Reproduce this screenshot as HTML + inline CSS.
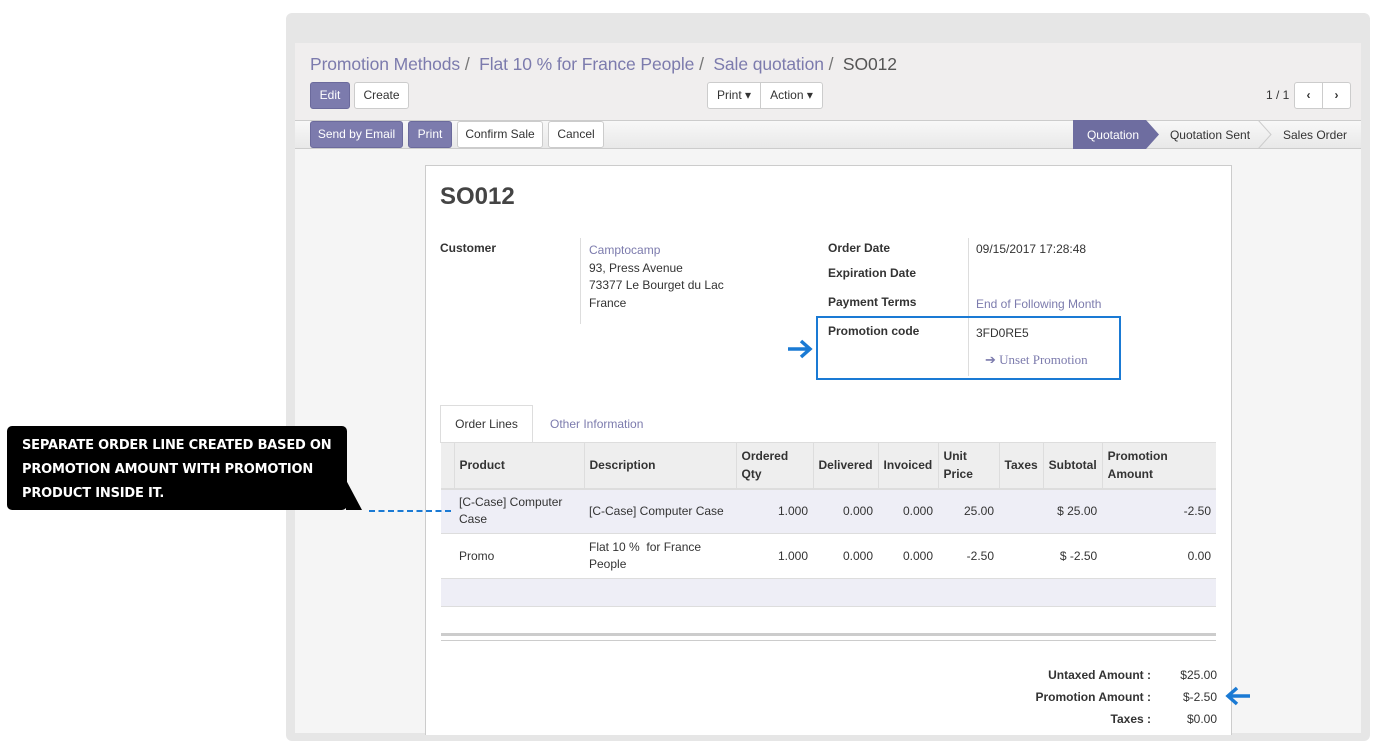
<!DOCTYPE html>
<html><head><meta charset="utf-8"><style>
*{box-sizing:border-box;margin:0;padding:0}
body{width:1384px;height:751px;background:#fff;font-family:"Liberation Sans",Arial,sans-serif;font-size:12px;color:#333;position:relative;overflow:hidden}
.a{position:absolute}
.btn{position:absolute;height:27px;border:1px solid #ccc;background:#fff;border-radius:3px;font-size:12px;line-height:25px;text-align:center;color:#333}
.bp{background:#7c7bad;border-color:#6b6a9c;color:#fff}
.lbl{font-weight:bold;color:#333;font-size:12px}
.lnk{color:#7c7bad}
table{border-collapse:collapse}
th{font-weight:bold;text-align:left;font-size:12px;line-height:18px;padding:0 5px;border-left:1px solid #ddd}
td{font-size:12px;line-height:17px;padding:0 5px}
</style></head><body>
<div class="a" style="left:286px;top:13px;width:1084px;height:728px;background:#e6e6e6;border-radius:6px"></div>
<div class="a" style="left:295px;top:43px;width:1066px;height:690px;background:#f5f5f5"></div>
<div class="a" style="left:295px;top:43px;width:1066px;height:77px;background:#f0eeee"></div>
<div class="a" style="left:310px;top:54px;font-size:17.5px;letter-spacing:-0.1px;color:#7c7bad;white-space:nowrap">Promotion Methods <span style="color:#777">/</span>&nbsp; Flat 10 % for France People <span style="color:#777">/</span>&nbsp; Sale quotation <span style="color:#777">/</span>&nbsp; <span style="color:#555">SO012</span></div>
<div class="btn bp" style="left:310px;top:82px;width:40px">Edit</div>
<div class="btn" style="left:354px;top:82px;width:55px">Create</div>
<div class="btn" style="left:707px;top:82px;width:54px;border-radius:3px 0 0 3px">Print ▾</div>
<div class="btn" style="left:760px;top:82px;width:63px;border-radius:0 3px 3px 0">Action ▾</div>
<div class="a" style="left:1266px;top:88px;font-size:12px">1 / 1</div>
<div class="btn" style="left:1294px;top:82px;width:29px;border-radius:3px 0 0 3px;font-weight:bold">‹</div>
<div class="btn" style="left:1322px;top:82px;width:29px;border-radius:0 3px 3px 0;font-weight:bold">›</div>
<div class="a" style="left:295px;top:120px;width:1066px;height:29px;background:linear-gradient(#f8f8f8,#e8e8e8);border-top:1px solid #ccc;border-bottom:1px solid #ccc"></div>
<div class="btn bp" style="left:310px;top:121px;width:93px">Send by Email</div>
<div class="btn bp" style="left:408px;top:121px;width:44px">Print</div>
<div class="btn" style="left:457px;top:121px;width:86px">Confirm Sale</div>
<div class="btn" style="left:548px;top:121px;width:56px">Cancel</div>
<svg class="a" style="left:1073px;top:120px" width="288" height="29"><polygon points="0,0 73,0 86,14.5 73,29 0,29" fill="#6e6da0"/><polyline points="185,0 198,14.5 185,29" fill="none" stroke="#ccc"/><text x="40" y="19" fill="#fff" font-size="12" text-anchor="middle" font-family="Liberation Sans">Quotation</text><text x="137" y="19" fill="#333" font-size="12" text-anchor="middle" font-family="Liberation Sans">Quotation Sent</text><text x="242" y="19" fill="#333" font-size="12" text-anchor="middle" font-family="Liberation Sans">Sales Order</text></svg>
<div class="a" style="left:425px;top:165px;width:807px;height:570px;background:#fff;border:1px solid #ccc;border-bottom:none"></div>
<div class="a" style="left:440px;top:183px;font-size:24px;font-weight:bold;color:#444">SO012</div>
<div class="a lbl" style="left:440px;top:241px">Customer</div>
<div class="a" style="left:580px;top:238px;height:86px;border-left:1px solid #ddd"></div>
<div class="a" style="left:589px;top:242px;line-height:17.5px"><span class="lnk">Camptocamp</span><br>93, Press Avenue<br>73377 Le Bourget du Lac<br>France</div>
<div class="a lbl" style="left:828px;top:241px">Order Date</div>
<div class="a lbl" style="left:828px;top:266px">Expiration Date</div>
<div class="a lbl" style="left:828px;top:295px">Payment Terms</div>
<div class="a lbl" style="left:828px;top:324px">Promotion code</div>
<div class="a" style="left:968px;top:238px;height:138px;border-left:1px solid #ddd"></div>
<div class="a" style="left:976px;top:242px">09/15/2017 17:28:48</div>
<div class="a lnk" style="left:976px;top:297px">End of Following Month</div>
<div class="a" style="left:976px;top:326px">3FD0RE5</div>
<div class="a lnk" style="left:985px;top:352px;font-family:'Liberation Serif',serif;font-size:13px">➔ Unset Promotion</div>
<div class="a" style="left:816px;top:316px;width:305px;height:64px;border:2px solid #1a7ad4"></div>
<svg class="a" style="left:786px;top:338px" width="28" height="22"><path d="M2 11H24M15 3L24 11L15 19" fill="none" stroke="#1a7ad4" stroke-width="3.5"/></svg>
<div class="a" style="left:440px;top:405px;width:93px;height:38px;border:1px solid #ddd;border-bottom:none;background:#fff;text-align:center;line-height:36px">Order Lines</div>
<div class="a lnk" style="left:550px;top:417px">Other Information</div>
<div class="a" style="left:441px;top:442px;width:775px;height:165px">
<table style="width:775px">
<tr style="height:46px;background:#eee;border-top:1px solid #ddd;border-bottom:2px solid #ddd"><th style="width:13px;border:none"></th><th style="width:130px">Product</th><th style="width:152px">Description</th><th style="width:77px">Ordered<br>Qty</th><th style="width:63px">Delivered</th><th style="width:60px">Invoiced</th><th style="width:61px">Unit<br>Price</th><th style="width:42px">Taxes</th><th style="width:59px">Subtotal</th><th>Promotion<br>Amount</th></tr>
<tr style="height:45px;background:#eeeef6;border-bottom:1px solid #ddd"><td></td><td>[C-Case] Computer<br>Case</td><td>[C-Case] Computer Case</td><td align="right">1.000</td><td align="right">0.000</td><td align="right">0.000</td><td align="right">25.00</td><td></td><td align="right">$ 25.00</td><td align="right">-2.50</td></tr>
<tr style="height:45px;border-bottom:1px solid #ddd"><td></td><td>Promo</td><td>Flat 10 %&nbsp; for France<br>People</td><td align="right">1.000</td><td align="right">0.000</td><td align="right">0.000</td><td align="right">-2.50</td><td></td><td align="right">$ -2.50</td><td align="right">0.00</td></tr>
<tr style="height:28px;background:#eeeef6;border-bottom:1px solid #ddd"><td colspan="10"></td></tr>
</table></div>
<div class="a" style="left:441px;top:633px;width:775px;height:8px;border-top:3px solid #ccc;border-bottom:1px solid #ccc"></div>
<div class="a lbl" style="left:900px;top:668px;width:251px;text-align:right">Untaxed Amount :</div>
<div class="a lbl" style="left:900px;top:690px;width:251px;text-align:right">Promotion Amount :</div>
<div class="a lbl" style="left:900px;top:712px;width:251px;text-align:right">Taxes :</div>
<div class="a" style="left:1160px;top:668px;width:57px;text-align:right">$25.00</div>
<div class="a" style="left:1160px;top:690px;width:57px;text-align:right">$-2.50</div>
<div class="a" style="left:1160px;top:712px;width:57px;text-align:right">$0.00</div>
<svg class="a" style="left:1224px;top:685px" width="28" height="22"><path d="M26 11H4M13 3L4 11L13 19" fill="none" stroke="#1a7ad4" stroke-width="3.5"/></svg>
<div class="a" style="left:7px;top:426px;width:340px;height:84px;background:#000;border-radius:5px"></div>
<svg class="a" style="left:340px;top:480px" width="25" height="31"><polygon points="6,0 6,30 22,30" fill="#000"/></svg>
<div class="a" style="left:22px;top:434px;color:#fff;font-family:'DejaVu Sans',sans-serif;font-size:13px;font-weight:bold;line-height:24px;letter-spacing:-0.2px">SEPARATE ORDER LINE CREATED BASED ON<br>PROMOTION AMOUNT WITH PROMOTION<br>PRODUCT INSIDE IT.</div>
<div class="a" style="left:369px;top:510px;width:82px;border-top:2px dashed #1a7ad4"></div>
</body></html>
